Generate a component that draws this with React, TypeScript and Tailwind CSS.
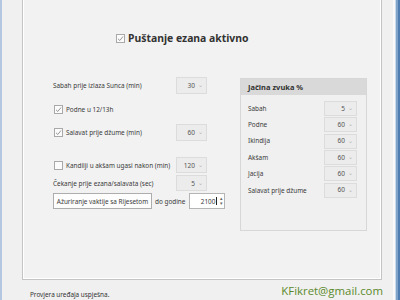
import { ReactNode } from 'react';

const font = { fontFamily: '"Noto Sans", "Open Sans", sans-serif' };

const Check = ({ checked }: { checked?: boolean }) => (
  <span className="flex h-[9px] w-[9px] shrink-0 items-center justify-center border border-[#a9a9a9] bg-[#fbfbfb]">
    {checked && (
      <svg width="7" height="7" viewBox="0 0 7 7">
        <path d="M1 3.8 L2.8 5.5 L6 1.5" fill="none" stroke="#8a8a8a" strokeWidth="0.9" />
      </svg>
    )}
  </span>
);

const Drop = ({ value, w = 'w-[31px]', h = 'h-[17px]' }: { value: string; w?: string; h?: string }) => (
  <div className={`${w} ${h} flex shrink-0 items-center justify-end border border-[#dcdcdc] bg-[#ececec] pr-[3px] text-[6.5px] text-[#555]`}>
    <span>{value}</span>
    <span className="ml-[3px] text-[6px] text-[#b0b0b0]">⌄</span>
  </div>
);

const Row = ({ children, className = '' }: { children: ReactNode; className?: string }) => (
  <div className={`flex items-center justify-between whitespace-nowrap ${className}`}>{children}</div>
);

const volumes = [
  ['Sabah', '5'],
  ['Podne', '60'],
  ['Ikindija', '60'],
  ['Akšam', '60'],
  ['Jacija', '60'],
  ['Salavat prije džume', '60'],
];

export default function App() {
  return (
    <div className="flex h-[300px] w-[400px] overflow-hidden bg-[#f0f0f0] text-[#3a3a3a]" style={font}>
      <div className="w-[2px] bg-[#b3c7e0]" />

      <div className="flex w-[391px] flex-col pl-[20px]">
        <div className="h-[280px] w-[360px] shrink-0 border-x border-b border-[#c4c4c4] bg-[#f2f2f2] shadow-[inset_1px_0_0_#fff,inset_-1px_-1px_0_#fff]">
          <div className="flex items-center pl-[93px] pt-[33px]">
            <Check checked />
            <span className="ml-[3px] whitespace-nowrap text-[10.4px] font-bold leading-none text-[#333]">Puštanje ezana aktivno</span>
          </div>

          <div className="mt-[33px] flex">
            <div className="w-[184px] pl-[30px] pt-[1px] text-[6.4px]">
              <Row className="h-[17px]">
                <span>Sabah prije izlaza Sunca (min)</span>
                <Drop value="30" />
              </Row>
              <Row className="mt-[8px] h-[14px] justify-start">
                <span className="ml-[1px]"><Check checked /></span>
                <span className="ml-[3px]">Podne u 12/13h</span>
              </Row>
              <Row className="mt-[8px] h-[17px]">
                <span className="flex items-center">
                  <span className="ml-[1px]"><Check checked /></span>
                  <span className="ml-[3px]">Salavat prije džume (min)</span>
                </span>
                <Drop value="60" />
              </Row>
              <Row className="mt-[16px] h-[16px]">
                <span className="flex items-center">
                  <span className="ml-[1px]"><Check /></span>
                  <span className="ml-[3px]">Kandilji u akšam ugasi nakon (min)</span>
                </span>
                <Drop value="120" h="h-[16px]" />
              </Row>
              <Row className="mt-[2px] h-[16px]">
                <span>Čekanje prije ezana/salavata (sec)</span>
                <Drop value="5" h="h-[16px]" />
              </Row>
              <div className="mt-[2px] flex h-[16px] items-center whitespace-nowrap">
                <div className="flex h-[16px] w-[99px] shrink-0 items-center justify-center border border-[#adadad] bg-[#fdfdfd]">
                  Ažuriranje vaktije sa Rijesetom
                </div>
                <span className="ml-[3px]">do godine</span>
                <div className="ml-[4px] flex h-[16px] w-[36px] shrink-0 items-center justify-end border border-[#b5b5b5] bg-white pr-[1px]">
                  <span>2100</span>
                  <span className="mx-[1px] h-[8px] w-px bg-[#222]" />
                  <span className="ml-[2px] flex flex-col text-[5px] leading-[5px] text-[#666]">
                    <span>▴</span>
                    <span>▾</span>
                  </span>
                </div>
              </div>
            </div>

            <div className="ml-[33px] mt-[2px] h-[153px] w-[127px] border border-[#d7d7d7] bg-[#f0f0f0]">
              <div className="flex h-[16px] items-center bg-[#d9d9d9] pl-[7px] text-[7.5px] font-bold text-[#333]">Jačina zvuka %</div>
              <div className="flex flex-col gap-[0.4px] pl-[7px] pr-[9px] pt-[5px] text-[6.4px]">
                {volumes.map(([label, value]) => (
                  <Row key={label} className="h-[16px]">
                    <span>{label}</span>
                    <Drop value={value} w="w-[33px]" h="h-[15px]" />
                  </Row>
                ))}
              </div>
            </div>
          </div>
        </div>

        <div className="flex items-start justify-between pr-[10px]">
          <span className="whitespace-nowrap pl-[8px] pt-[10px] text-[6.4px] text-[#333]">Provjera uređaja uspješna.</span>
          <span className="pt-[2px] text-[11.4px] text-[#5b8a2c]" style={{ fontFamily: '"Open Sans", sans-serif' }}>
            KFikret@gmail.com
          </span>
        </div>
      </div>

      <div className="flex w-[7px]">
        <div className="w-[2px] bg-[#f7f9fb]" />
        <div className="w-[1px] bg-[#c9d8ea]" />
        <div className="w-[2px] bg-[#80a3c9]" />
        <div className="w-[2px] bg-[#4d7db2]" />
      </div>
    </div>
  );
}
